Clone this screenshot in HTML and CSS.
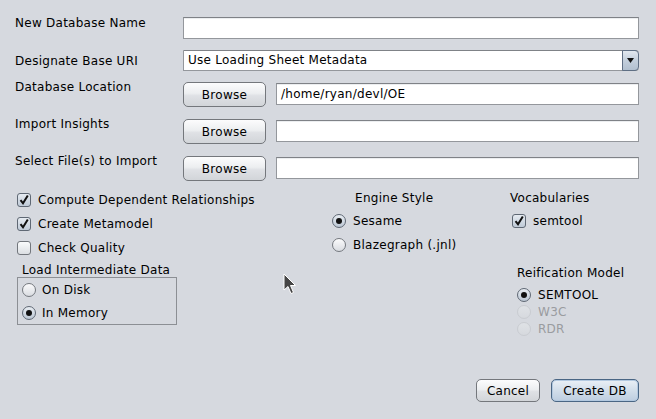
FILE: index.html
```html
<!DOCTYPE html>
<html>
<head>
<meta charset="utf-8">
<link rel="stylesheet" href="styles.css">
</head>
<body>
<div class="dialog">
  <div class="form">
    <div class="row r-name">
      <label class="lbl">New Database Name</label>
      <div class="field"></div>
    </div>
    <div class="row r-uri">
      <label class="lbl">Designate Base URI</label>
      <div class="combo">
        <span class="combo-text">Use Loading Sheet Metadata</span>
        <span class="combo-btn"><svg width="7" height="5" viewBox="0 0 7 5"><path d="M0 0H7L3.5 5Z" fill="#111"/></svg></span>
      </div>
    </div>
    <div class="row r-file">
      <label class="lbl">Database Location</label>
      <button class="btn browse">Browse</button>
      <div class="field">/home/ryan/devl/OE</div>
    </div>
    <div class="row r-file">
      <label class="lbl">Import Insights</label>
      <button class="btn browse">Browse</button>
      <div class="field"></div>
    </div>
    <div class="row r-file">
      <label class="lbl">Select File(s) to Import</label>
      <button class="btn browse">Browse</button>
      <div class="field"></div>
    </div>
  </div>

  <div class="options">
    <div class="col col-left">
      <div class="check"><span class="cbox on"><svg width="12" height="12" viewBox="0 0 12 12"><path d="M2.5 6.2L5 9.2L9.8 1.5" fill="none" stroke="#111" stroke-width="2"/></svg></span>Compute Dependent Relationships</div>
      <div class="check"><span class="cbox on"><svg width="12" height="12" viewBox="0 0 12 12"><path d="M2.5 6.2L5 9.2L9.8 1.5" fill="none" stroke="#111" stroke-width="2"/></svg></span>Create Metamodel</div>
      <div class="check"><span class="cbox"></span>Check Quality</div>
      <div class="group-title">Load Intermediate Data</div>
      <div class="group">
        <div class="radio"><span class="rbtn"></span>On Disk</div>
        <div class="radio"><span class="rbtn on"></span>In Memory</div>
      </div>
    </div>
    <div class="col col-engine">
      <div class="engine">
        <div class="col-title engine-title">Engine Style</div>
        <div class="radio"><span class="rbtn on"></span>Sesame</div>
        <div class="radio"><span class="rbtn"></span>Blazegraph (.jnl)</div>
      </div>
    </div>
    <div class="col col-vocab">
      <div class="col-title">Vocabularies</div>
      <div class="check"><span class="cbox on"><svg width="12" height="12" viewBox="0 0 12 12"><path d="M2.5 6.2L5 9.2L9.8 1.5" fill="none" stroke="#111" stroke-width="2"/></svg></span>semtool</div>
      <div class="reif">
        <div class="reif-title">Reification Model</div>
        <div class="radio"><span class="rbtn on"></span>SEMTOOL</div>
        <div class="radio disabled"><span class="rbtn"></span>W3C</div>
        <div class="radio disabled"><span class="rbtn"></span>RDR</div>
      </div>
    </div>
  </div>

  <div class="footer">
    <button class="btn cancel">Cancel</button>
    <button class="btn create">Create DB</button>
  </div>

  <svg class="cursor" width="15" height="23" viewBox="0 0 15 23"><path d="M1 1V17L5 13.5L8 20.5L10.5 19.5L7.5 12.5H12.5Z" fill="#454545" stroke="#fff" stroke-width="1"/></svg>
</div>
</body>
</html>
```
FILE: styles.css
```css
html, body {
  margin: 0;
  background: #d6d9df;
}
body {
  font-family: "DejaVu Sans", sans-serif;
  font-size: 12px;
  line-height: 14px;
  letter-spacing: 0.26px;
  color: #000;
}
.dialog {
  position: relative;
  height: 419px;
  box-sizing: border-box;
  padding: 17px 17px 17px 15px;
  display: flex;
  flex-direction: column;
}
.row {
  display: flex;
}
.r-name {
  height: 22px;
}
.r-uri {
  height: 21px;
  margin-top: 11px;
  align-items: center;
}
.r-file {
  height: 25px;
  margin-top: 12px;
}
.r-uri + .r-file {
  margin-top: 11px;
}
.lbl {
  width: 168px;
  flex: none;
}
.r-name .lbl {
  margin-top: -1px;
}
.r-file .lbl {
  margin-top: -2px;
}
.field {
  flex: 1;
  height: 22px;
  box-sizing: border-box;
  border: 1px solid #94979c;
  border-top-color: #7f8287;
  background: #fff;
  box-shadow: inset 0 1px 0 #eceef0;
  padding: 0 4px;
  line-height: 20px;
}
.r-file .field {
  margin-left: 10px;
  margin-top: 1px;
}
.btn {
  font: inherit;
  letter-spacing: inherit;
  color: #000;
  height: 25px;
  box-sizing: border-box;
  border: 1px solid #74777c;
  border-radius: 5px;
  background: linear-gradient(#fcfcfd, #eceef0 45%, #dfe1e5 55%, #d2d5d9);
  padding: 0;
  flex: none;
}
.browse {
  width: 83px;
}
.combo {
  flex: 1;
  height: 21px;
  box-sizing: border-box;
  border: 1px solid #94979c;
  border-top-color: #7f8287;
  border-right: none;
  border-radius: 0 4px 4px 0;
  background: #fff;
  display: flex;
}
.combo-text {
  flex: 1;
  padding-left: 4px;
  line-height: 19px;
}
.combo-btn {
  width: 17px;
  margin: -1px 0 -1px 0;
  box-sizing: border-box;
  border: 1px solid #5f6f84;
  border-radius: 0 4px 4px 0;
  background: linear-gradient(#e2e8ef, #c3cfdc 50%, #b2c0d0);
  display: flex;
  align-items: center;
  justify-content: center;
}
.options {
  display: flex;
  margin-top: 7px;
}
.col-left {
  width: 317px;
  flex: none;
}
.col-engine {
  width: 178px;
  flex: none;
}
.check {
  display: flex;
  align-items: center;
  height: 24px;
  padding-left: 2px;
}
.cbox {
  width: 14px;
  height: 14px;
  box-sizing: border-box;
  border: 1px solid #72767c;
  border-radius: 3px;
  background: linear-gradient(#fafbfc, #dcdfe3);
  margin-right: 7px;
  display: flex;
  align-items: center;
  justify-content: center;
  flex: none;
}
.cbox.on {
  background: linear-gradient(#e6ebf1, #bfcad7);
  border-color: #5f6874;
}
.group-title {
  margin: 3px 0 0 7px;
}
.group {
  width: 160px;
  box-sizing: border-box;
  border: 1px solid #8c8f94;
  margin-left: 2px;
  padding-left: 4px;
}
.group .radio {
  height: 23px;
}
.radio {
  display: flex;
  align-items: center;
  height: 24px;
}
.rbtn {
  width: 14px;
  height: 14px;
  box-sizing: border-box;
  border: 1px solid #74787e;
  border-radius: 50%;
  background: linear-gradient(#fbfbfc, #d9dce1);
  margin-right: 7px;
  display: flex;
  align-items: center;
  justify-content: center;
  flex: none;
}
.group .rbtn {
  margin-right: 6px;
}
.rbtn.on {
  background: linear-gradient(#e8edf2, #bcc7d4);
  border-color: #5f6874;
}
.rbtn.on::after {
  content: "";
  width: 6px;
  height: 6px;
  border-radius: 50%;
  background: #111;
}
.engine {
  display: inline-flex;
  flex-direction: column;
}
.col-title {
  margin-top: 3px;
  margin-bottom: 4px;
}
.engine-title {
  align-self: center;
}
.reif {
  margin-top: 33px;
  margin-left: 7px;
}
.reif-title {
  margin-bottom: 6px;
}
.reif .radio {
  height: 17px;
}
.radio.disabled {
  color: #9a9ca0;
}
.radio.disabled .rbtn {
  border-color: #c9ccd1;
  background: linear-gradient(#dfe2e6, #d6d9de);
}
.footer {
  margin-top: auto;
  display: flex;
  justify-content: flex-end;
  gap: 11px;
}
.cancel, .create {
  height: 23px;
}
.cancel {
  width: 64px;
}
.create {
  width: 88px;
  border-color: #4a6684;
  background: linear-gradient(#eaf0f6, #d2deea 50%, #bdcde0);
  box-shadow: inset 0 0 0 1px #b3c9e0;
}
.cursor {
  position: absolute;
  left: 283px;
  top: 273px;
}
```
